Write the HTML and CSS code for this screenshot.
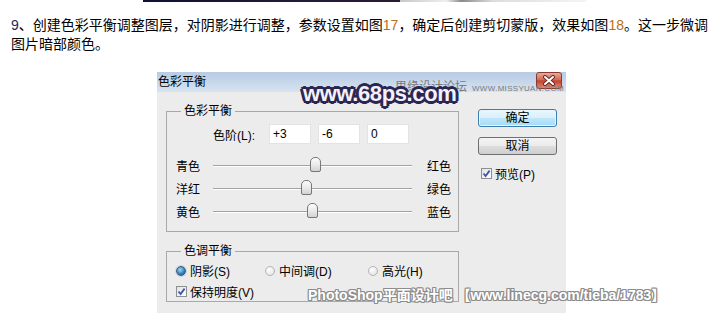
FILE: index.html
```html
<!DOCTYPE html>
<html lang="zh-CN">
<head>
  <meta charset="UTF-8">
  <meta name="viewport" content="width=device-width, initial-scale=1.0">
  <title>色彩平衡</title>
  <link rel="stylesheet" href="styles.css">
</head>
<body>
  <div class="photo-edge">
    <div class="photo-dark"></div>
    <div class="photo-light"></div>
  </div>

  <p class="step-text"><span class="num-first">9</span>、创建色彩平衡调整图层，对阴影进行调整，参数设置如图<span class="num">17</span>，确定后创建剪切蒙版，效果如图<span class="num">18</span>。这一步微调图片暗部颜色。</p>

  <div class="dialog">
    <div class="titlebar">
      <span class="title">色彩平衡</span>
      <span class="close">
        <svg width="14" height="11" viewBox="0 0 14 11">
          <path d="M3 2 L11 9 M11 2 L3 9" stroke="#6b2a22" stroke-width="4" stroke-linecap="round"/>
          <path d="M3 2 L11 9 M11 2 L3 9" stroke="#fff" stroke-width="2" stroke-linecap="round"/>
        </svg>
      </span>
    </div>

    <div class="dialog-body">
      <div class="left-col">
        <fieldset class="group">
          <legend>色彩平衡</legend>
          <div class="levels">
            <label for="lv1">色阶(L):</label>
            <input type="text" id="lv1" value="+3">
            <input type="text" value="-6">
            <input type="text" value="0">
          </div>
          <div class="sliders">
            <div class="slider-row">
              <span class="s-left">青色</span>
              <div class="track"><span class="thumb" style="--v: 103"></span></div>
              <span class="s-right">红色</span>
            </div>
            <div class="slider-row">
              <span class="s-left">洋红</span>
              <div class="track"><span class="thumb" style="--v: 94"></span></div>
              <span class="s-right">绿色</span>
            </div>
            <div class="slider-row">
              <span class="s-left">黄色</span>
              <div class="track"><span class="thumb" style="--v: 100"></span></div>
              <span class="s-right">蓝色</span>
            </div>
          </div>
        </fieldset>

        <fieldset class="group tone">
          <legend>色调平衡</legend>
          <div class="radios">
            <span class="opt opt-1"><i class="radio on"></i>阴影(S)</span>
            <span class="opt opt-2"><i class="radio"></i>中间调(D)</span>
            <span class="opt"><i class="radio"></i>高光(H)</span>
          </div>
          <div class="check-row">
            <i class="check"><svg width="9" height="9" viewBox="0 0 9 9"><path d="M1.5 4.5 L3.6 7 L7.6 1.6" fill="none" stroke="#3a56b0" stroke-width="1.8"/></svg></i>保持明度(V)
          </div>
        </fieldset>
      </div>

      <div class="right-col">
        <div class="btn default">确定</div>
        <div class="btn">取消</div>
        <div class="check-row preview">
          <i class="check"><svg width="9" height="9" viewBox="0 0 9 9"><path d="M1.5 4.5 L3.6 7 L7.6 1.6" fill="none" stroke="#3a56b0" stroke-width="1.8"/></svg></i>预览(P)
        </div>
      </div>
    </div>

    <div class="wm-missyuan">思缘设计论坛<small>WWW.MISSYUAN.COM</small></div>
    <div class="wm-68ps">www.68ps.com</div>
    <div class="wm-linecg">PhotoShop平面设计吧 【www.linecg.com/tieba/1783】</div>
  </div>
</body>
</html>
```

FILE: styles.css
```css
body {
  margin: 0;
  font-family: "Liberation Sans", "Noto Sans CJK SC", sans-serif;
  background: #fff;
  color: #000;
  overflow: hidden;
}

.photo-edge {
  display: flex;
  width: 443px;
  height: 2px;
  margin-left: 143px;
}

.photo-dark {
  width: 257px;
  background: linear-gradient(90deg, #0e1034, #221a3c 60%, #2d1a30);
}

.photo-light {
  flex: 1;
  background: linear-gradient(90deg, #c8c8c8, #eee 25%, #8a8a8a 33%, #ddd 50%, #f4f4f4);
}

.step-text {
  margin: 14px 0 0;
  padding-left: 11px;
  font-size: 14px;
  line-height: 19px;
}

.num-first {
  color: #1b2a5a;
}

.num {
  color: #b8701a;
}

/* dialog */
.dialog {
  position: relative;
  width: 409px;
  height: 241px;
  margin: 18px 0 0 157px;
  background: #ececec;
  font-size: 12px;
}

.titlebar {
  display: flex;
  justify-content: space-between;
  height: 20px;
  padding-left: 1px;
  background: linear-gradient(#b7cbe4, #d7e3f1);
}

.title {
  line-height: 20px;
}

.close {
  display: flex;
  align-items: center;
  justify-content: center;
  width: 26px;
  height: 17px;
  margin-right: 4px;
  box-sizing: border-box;
  border: 1px solid #8a3a30;
  border-radius: 3px;
  background: linear-gradient(#e8ab9c, #d06450 48%, #c2402d 52%, #df8b78);
}

.dialog-body {
  display: flex;
  padding-left: 9px;
}

.left-col {
  width: 293px;
}

.group {
  min-width: 0;
  margin: 12px 0 0;
  padding: 0 0 8px;
  border: 1px solid #a9a9a9;
}

.group legend {
  margin-left: 14px;
  padding: 0 3px;
  font-size: 12px;
  line-height: 14px;
}

.levels {
  display: flex;
  align-items: center;
  gap: 7px;
  height: 20px;
  margin-top: 6px;
  padding-left: 46px;
}

.levels label {
  width: 49px;
}

.levels input {
  width: 42px;
  height: 20px;
  box-sizing: border-box;
  padding: 0 3px;
  border: 1px solid #e3e3e3;
  background: #fff;
  font: 12px "Liberation Sans", sans-serif;
  color: #000;
}

.sliders {
  margin-top: 10px;
}

.slider-row {
  display: flex;
  align-items: center;
  height: 23px;
  padding-left: 9px;
}

.s-left {
  width: 37px;
}

.s-right {
  margin-left: 15px;
}

.track {
  position: relative;
  width: 199px;
  height: 0;
  border-top: 1px solid #a2a2a2;
  border-bottom: 1px solid #fff;
}

.thumb {
  position: absolute;
  top: -9px;
  left: calc((100% - 11px) * var(--v) / 200);
  width: 11px;
  height: 15px;
  box-sizing: border-box;
  border: 1px solid #777;
  border-radius: 5px 5px 2px 2px;
  background: linear-gradient(#fdfdfd, #e6e6e6 60%, #d2d2d2);
}

.tone {
  padding-bottom: 0;
}

.radios {
  display: flex;
  align-items: center;
  height: 21px;
  margin-top: 2px;
  padding-left: 9px;
}

.opt {
  display: flex;
  align-items: center;
  gap: 4px;
}

.opt-1 {
  width: 89px;
}

.opt-2 {
  width: 103px;
}

.radio {
  width: 10px;
  height: 10px;
  box-sizing: border-box;
  border: 1px solid #b4b4b4;
  border-radius: 50%;
  background: radial-gradient(circle at 40% 35%, #fff, #dcdcdc);
}

.radio.on {
  border-color: #4a5a70;
  background: radial-gradient(circle at 40% 35%, #9fd8f8, #2f86c4 55%, #1d4f80);
  box-shadow: 0 0 0 1px #cdd6e0;
}

.check-row {
  display: flex;
  align-items: center;
  gap: 3px;
  height: 20px;
}

.tone .check-row {
  padding-left: 9px;
}

.check {
  display: flex;
  align-items: center;
  justify-content: center;
  width: 11px;
  height: 11px;
  box-sizing: border-box;
  border: 1px solid #8e8f8f;
  background: linear-gradient(135deg, #e2e2e2, #fff);
}

.right-col {
  width: 79px;
  margin-left: 19px;
}

.btn {
  height: 18px;
  margin-top: 10px;
  box-sizing: border-box;
  border: 1px solid #707070;
  border-radius: 3px;
  background: linear-gradient(#f4f4f4, #ebebeb 50%, #dddddd 51%, #cfcfcf);
  text-align: center;
  line-height: 16px;
}

.btn.default {
  margin-top: 17px;
  border-color: #3c7fb1;
  background: linear-gradient(#eaf6fd, #d9f0fc 50%, #bee6fd 51%, #a7d9f5);
  box-shadow: inset 0 0 0 1px #e6f5fe;
}

.preview {
  height: 13px;
  margin-top: 12px;
  padding-left: 3px;
}

/* watermarks over the screenshot */
.wm-missyuan {
  position: absolute;
  top: 8px;
  left: 238px;
  color: #7a7a7a;
  font-size: 12px;
  line-height: 14px;
  white-space: nowrap;
}

.wm-missyuan small {
  margin-left: 5px;
  font-size: 8px;
  letter-spacing: 0.3px;
}

.wm-68ps {
  position: absolute;
  top: 10px;
  left: 146px;
  color: #f3f1fa;
  font: bold 22px/24px "Liberation Sans", sans-serif;
  letter-spacing: -0.4px;
  white-space: nowrap;
  text-shadow:
    2px 0 0 #2b2552, -2px 0 0 #2b2552, 0 2px 0 #2b2552, 0 -2px 0 #2b2552,
    2px 2px 0 #2b2552, -2px -2px 0 #2b2552, 2px -2px 0 #2b2552, -2px 2px 0 #2b2552,
    3px 0 0 #2b2552, -3px 0 0 #2b2552, 0 3px 0 #2b2552, 0 -3px 0 #2b2552;
}

.wm-linecg {
  position: absolute;
  top: 215px;
  left: 151px;
  color: #fff;
  font: bold 14px/16px "Liberation Sans", "Noto Sans CJK SC", sans-serif;
  white-space: nowrap;
  text-shadow:
    1px 0 0 #8c8c8c, -1px 0 0 #8c8c8c, 0 1px 0 #8c8c8c, 0 -1px 0 #8c8c8c,
    1px 1px 0 #8c8c8c, -1px -1px 0 #8c8c8c, 1px -1px 0 #8c8c8c, -1px 1px 0 #8c8c8c;
}
```
